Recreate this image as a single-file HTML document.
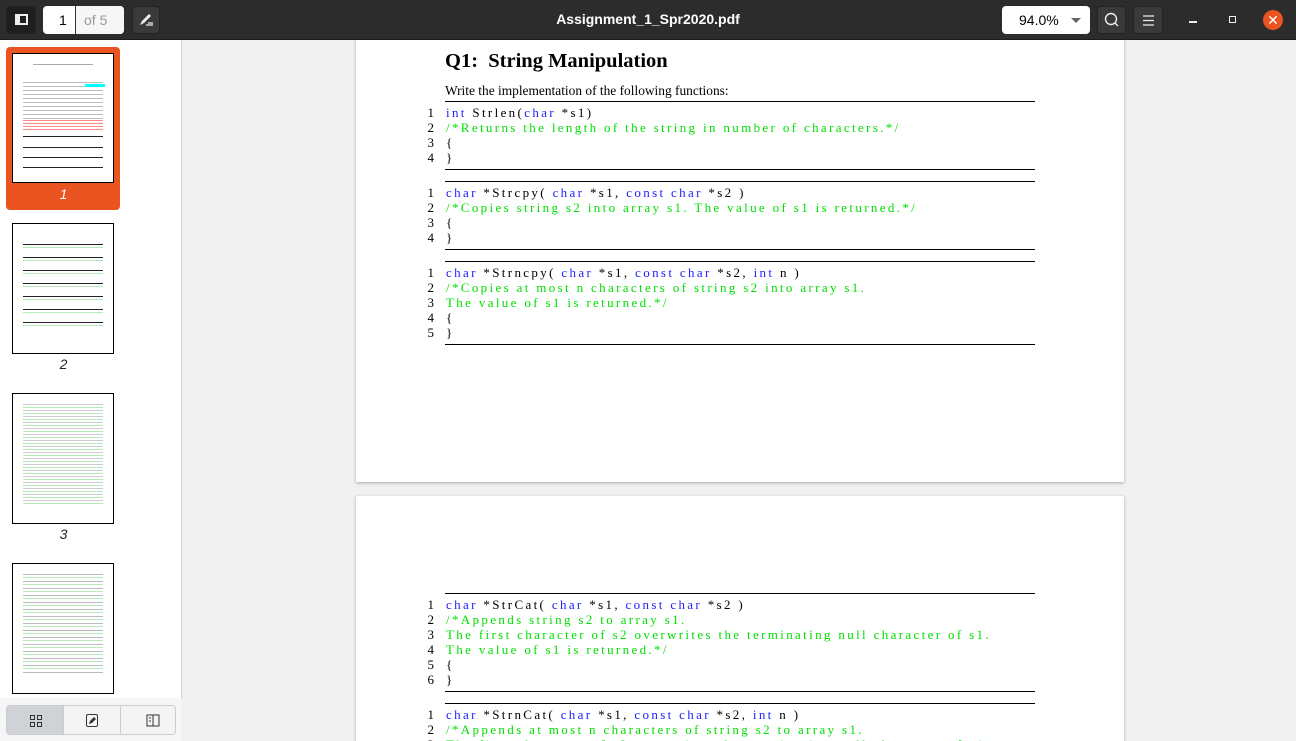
<!DOCTYPE html>
<html><head><meta charset="utf-8"><style>
*{margin:0;padding:0;box-sizing:border-box}
html,body{width:1296px;height:741px;overflow:hidden}
body{background:#ececee;font-family:"Liberation Sans",sans-serif;position:relative}
.top{position:absolute;left:0;top:0;width:1296px;height:40px;background:#2c2c2c;border-bottom:1px solid #1c1c1c}
.btn{position:absolute;top:6px;height:28px;border-radius:4px;background:#3a3a3a;border:1px solid #232323}
.side{position:absolute;left:0;top:40px;width:182px;height:701px;background:#fff;border-right:1px solid #d6d6d6}
.main{position:absolute;left:183px;top:40px;width:1113px;height:701px;background:#f1f1f2;overflow:hidden}
.page{position:absolute;background:#fff;box-shadow:0 1px 3px rgba(0,0,0,.3)}
.code{position:absolute;left:0;font-family:"Liberation Serif",serif;font-size:13px;letter-spacing:2.35px;line-height:15px;white-space:pre;color:#000}
.num{position:absolute;width:20px;text-align:right;left:-32px;letter-spacing:0}
.rule{position:absolute;left:89px;width:590px;height:1px;background:#000}
.b{color:#2020ff}.g{color:#00e000}
.th{position:absolute;left:12px;width:102px;height:131px;border:1px solid #000;background:#fff}
.tl{position:absolute;left:0;width:127px;text-align:center;font-style:italic;font-size:14px;color:#222}
.bar{position:absolute;left:13px;height:1px;background:#222}
</style></head><body>
<div class="top">
 <div class="btn" style="left:6px;width:30px;background:#1e1e1e;"><div style="position:absolute;left:8px;top:7px;width:13px;height:11px;border:2px solid #eee;border-left-width:5px"></div></div>
 <div style="position:absolute;left:43px;top:6px;width:81px;height:28px;background:#fff;border-radius:4px"><span style="position:absolute;left:16px;top:6px;font-size:14px">1</span><div style="position:absolute;left:32px;top:0;width:1px;height:28px;background:#333"></div><div style="position:absolute;left:33px;top:0;width:48px;height:28px;background:#f6f6f6;border-radius:0 4px 4px 0"></div><span style="position:absolute;left:41px;top:6px;font-size:14px;color:#999">of 5</span></div>
 <div class="btn" style="left:132px;width:28px;"><svg width="28" height="28" viewBox="0 0 28 28" style="position:absolute;left:-1px;top:-1px"><path d="M8 19l2-4 7-7 2 2-7 7z" fill="#eee"/><path d="M14 19h7M16 17h5" stroke="#eee" stroke-width="1.2"/></svg></div>
 <div style="position:absolute;left:0;width:1296px;top:11px;text-align:center;color:#fff;font-weight:bold;font-size:14px">Assignment_1_Spr2020.pdf</div>
 <div style="position:absolute;left:1002px;top:6px;width:88px;height:28px;background:#fff;border-radius:4px"><span style="position:absolute;left:17px;top:6px;font-size:14px">94.0%</span><div style="position:absolute;left:69px;top:12px;border:5px solid transparent;border-top-color:#666"></div></div>
 <div class="btn" style="left:1097px;width:29px"><svg width="28" height="28" style="position:absolute;left:0;top:0"><circle cx="13" cy="12" r="5.5" fill="none" stroke="#eee" stroke-width="1.4"/><path d="M17 16l3 3" stroke="#eee" stroke-width="1.4"/></svg></div>
 <div class="btn" style="left:1133px;width:30px"><svg width="28" height="28" style="position:absolute;left:0;top:0"><path d="M9 9h11M9 13.5h11M9 18h11" stroke="#eee" stroke-width="1.2"/></svg></div>
 <div style="position:absolute;left:1189px;top:21px;width:8px;height:1.5px;background:#eee"></div>
 <div style="position:absolute;left:1229px;top:16px;width:7px;height:7px;border:1.2px solid #eee"></div>
 <div style="position:absolute;left:1263px;top:10px;width:20px;height:20px;border-radius:50%;background:#e95420;color:#fff;text-align:center;font-size:14px;line-height:20px">✕</div>
</div>
<div class="side">
 <div style="position:absolute;left:6px;top:7px;width:114px;height:163px;background:#e95420;border-radius:4px"></div>
 <div class="th" style="top:13px;height:130px"><div style="position:absolute;left:20px;top:10px;width:60px;height:1px;background:#aaa"></div><div style="position:absolute;left:10px;top:28px;width:80px;height:40px;background:repeating-linear-gradient(#bbb 0 1px,transparent 1px 4px)"></div><div style="position:absolute;left:72px;top:30px;width:20px;height:3px;background:#0ff"></div><div class="bar" style="left:10px;top:66px;width:80px;background:repeating-linear-gradient(#f88 0 1px,transparent 1px 3px);height:10px"></div><div class="bar" style="left:10px;top:82px;width:80px"></div><div class="bar" style="left:10px;top:93px;width:80px"></div><div class="bar" style="left:10px;top:103px;width:80px"></div><div class="bar" style="left:10px;top:113px;width:80px"></div></div>
 <div class="tl" style="top:146px;color:#fff">1</div>
 <div class="th" style="top:183px"><div style="position:absolute;left:10px;top:20px;width:80px;height:90px;background:repeating-linear-gradient(#222 0 1px,#fff 1px 3px,#b8eab8 3px 4px,#fff 4px 13px)"></div></div>
 <div class="tl" style="top:316px">2</div>
 <div class="th" style="top:353px"><div style="position:absolute;left:10px;top:10px;width:80px;height:100px;background:repeating-linear-gradient(#ccc 0 1px,#fff 1px 3px,#b8eab8 3px 4px,#fff 4px 6px)"></div></div>
 <div class="tl" style="top:486px">3</div>
 <div class="th" style="top:523px"><div style="position:absolute;left:10px;top:10px;width:80px;height:100px;background:repeating-linear-gradient(#bbb 0 1px,#fff 1px 3px,#b8eab8 3px 4px,#fff 4px 7px)"></div></div>
 <div style="position:absolute;left:0;top:658px;width:182px;height:43px;background:#f6f6f6"></div>
 <div style="position:absolute;left:6px;top:665px;width:170px;height:30px;border:1px solid #ccc;border-radius:4px;background:#f4f4f4;overflow:hidden">
  <div style="position:absolute;left:0;top:0;width:57px;height:30px;background:#cfd3d8;border-right:1px solid #ccc"></div>
  <div style="position:absolute;left:113px;top:0;width:1px;height:30px;background:#ccc"></div>
  <svg width="170" height="30" style="position:absolute;left:0;top:0"><g fill="none" stroke="#333" stroke-width="1"><rect x="23.5" y="9.5" width="4" height="4"/><rect x="30.5" y="9.5" width="4" height="4"/><rect x="23.5" y="16.5" width="4" height="4"/><rect x="30.5" y="16.5" width="4" height="4"/><rect x="79.5" y="8.5" width="11" height="12" rx="1.5"/><path d="M140 9h12v11h-12zM146 9v11M142 12h2M142 15h2"/></g><path d="M82 18l1-3 4-4 2 2-4 4z" fill="#333"/></svg>
 </div>
</div>
<div class="main">
 <div class="page" style="left:173px;top:-2px;width:768px;height:444px">
  <div style="position:absolute;left:89px;top:12px;font-family:'Liberation Serif',serif;font-size:20.5px;font-weight:bold">Q1:&nbsp; String Manipulation</div>
  <div style="position:absolute;left:89px;top:45px;font-family:'Liberation Serif',serif;font-size:13.4px">Write the implementation of the following functions:</div>
  <div class="rule" style="top:63px"></div>
  <div class="code" style="left:90px;top:67px"><span class="num">1</span><span class="b">int</span> Strlen(<span class="b">char</span> *s1)
<span class="num" style="top:15px">2</span><span class="g">/*Returns the length of the string in number of characters.*/</span>
<span class="num" style="top:30px">3</span>{
<span class="num" style="top:45px">4</span>}</div>
  <div class="rule" style="top:131px"></div>
  <div class="rule" style="top:143px"></div>
  <div class="code" style="left:90px;top:147px"><span class="num">1</span><span class="b">char</span> *Strcpy( <span class="b">char</span> *s1, <span class="b">const char</span> *s2 )
<span class="num" style="top:15px">2</span><span class="g">/*Copies string s2 into array s1. The value of s1 is returned.*/</span>
<span class="num" style="top:30px">3</span>{
<span class="num" style="top:45px">4</span>}</div>
  <div class="rule" style="top:211px"></div>
  <div class="rule" style="top:223px"></div>
  <div class="code" style="left:90px;top:227px"><span class="num">1</span><span class="b">char</span> *Strncpy( <span class="b">char</span> *s1, <span class="b">const char</span> *s2, <span class="b">int</span> n )
<span class="num" style="top:15px">2</span><span class="g">/*Copies at most n characters of string s2 into array s1.</span>
<span class="num" style="top:30px">3</span><span class="g">The value of s1 is returned.*/</span>
<span class="num" style="top:45px">4</span>{
<span class="num" style="top:60px">5</span>}</div>
  <div class="rule" style="top:306px"></div>
 </div>
 <div class="page" style="left:173px;top:456px;width:768px;height:260px">
  <div class="rule" style="top:97px"></div>
  <div class="code" style="left:90px;top:101px"><span class="num">1</span><span class="b">char</span> *StrCat( <span class="b">char</span> *s1, <span class="b">const char</span> *s2 )
<span class="num" style="top:15px">2</span><span class="g">/*Appends string s2 to array s1.</span>
<span class="num" style="top:30px">3</span><span class="g">The first character of s2 overwrites the terminating null character of s1.</span>
<span class="num" style="top:45px">4</span><span class="g">The value of s1 is returned.*/</span>
<span class="num" style="top:60px">5</span>{
<span class="num" style="top:75px">6</span>}</div>
  <div class="rule" style="top:195px"></div>
  <div class="rule" style="top:207px"></div>
  <div class="code" style="left:90px;top:211px"><span class="num">1</span><span class="b">char</span> *StrnCat( <span class="b">char</span> *s1, <span class="b">const char</span> *s2, <span class="b">int</span> n )
<span class="num" style="top:15px">2</span><span class="g">/*Appends at most n characters of string s2 to array s1.</span>
<span class="num" style="top:30px">3</span><span class="g">The first character of s2 overwrites the terminating null character of s1.</span></div>
 </div>
</div>
</body></html>
